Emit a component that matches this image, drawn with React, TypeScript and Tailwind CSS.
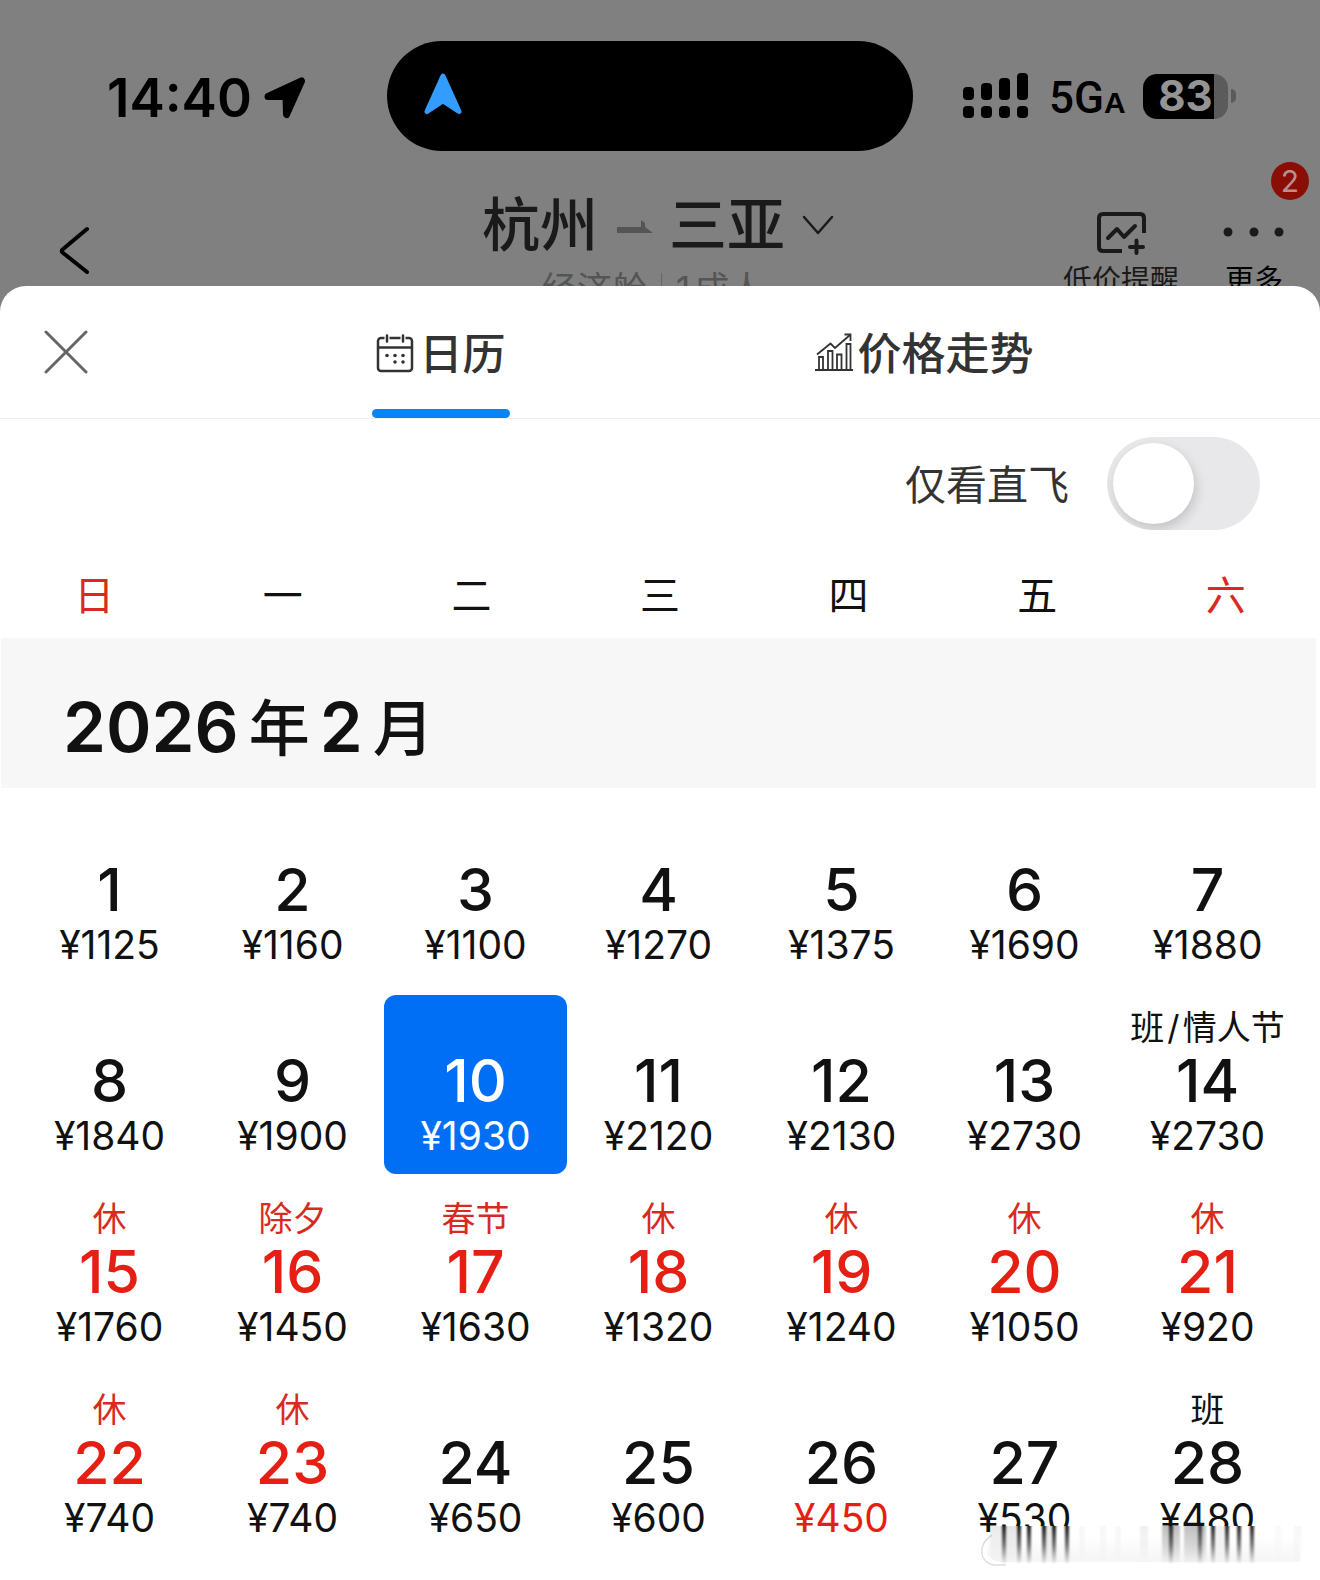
import React, { useState } from 'react';

type Day = {
  day: number;
  price: number;
  note?: string;
  holiday?: boolean;
  lowest?: boolean;
};

const weekdays = ['日', '一', '二', '三', '四', '五', '六'];

const days: Day[] = [
  { day: 1, price: 1125 },
  { day: 2, price: 1160 },
  { day: 3, price: 1100 },
  { day: 4, price: 1270 },
  { day: 5, price: 1375 },
  { day: 6, price: 1690 },
  { day: 7, price: 1880 },
  { day: 8, price: 1840 },
  { day: 9, price: 1900 },
  { day: 10, price: 1930 },
  { day: 11, price: 2120 },
  { day: 12, price: 2130 },
  { day: 13, price: 2730 },
  { day: 14, price: 2730, note: '班\u200a/\u200a情人节' },
  { day: 15, price: 1760, note: '休', holiday: true },
  { day: 16, price: 1450, note: '除夕', holiday: true },
  { day: 17, price: 1630, note: '春节', holiday: true },
  { day: 18, price: 1320, note: '休', holiday: true },
  { day: 19, price: 1240, note: '休', holiday: true },
  { day: 20, price: 1050, note: '休', holiday: true },
  { day: 21, price: 920, note: '休', holiday: true },
  { day: 22, price: 740, note: '休', holiday: true },
  { day: 23, price: 740, note: '休', holiday: true },
  { day: 24, price: 650 },
  { day: 25, price: 600 },
  { day: 26, price: 450, lowest: true },
  { day: 27, price: 530 },
  { day: 28, price: 480, note: '班' },
];

// x, width and opacity of each streak in the faded strip
const streaks = [
  [14, 12, 0.08], [26, 4, 0.9], [30, 10, 0.1], [41, 4, 0.9], [51, 4, 0.9], [66, 4, 0.9], [69, 6, 0.1],
  [76, 4, 0.9], [89, 4, 0.9], [103, 6, 0.03], [124, 6, 0.03], [139, 6, 0.03], [164, 8, 0.06],
  [186, 18, 0.25], [193, 4, 0.8], [208, 22, 0.25], [222, 4, 0.7], [235, 4, 0.85], [240, 8, 0.06], [249, 4, 0.85],
  [261, 4, 0.85], [274, 4, 0.85], [298, 8, 0.02], [318, 8, 0.03],
];

const StatusBar = () => (
  <div className="grid grid-cols-[1fr_526px_1fr] items-center pt-[41px] pr-5 text-black">
    <div className="flex items-center gap-3 pl-[107px]">
      <span className="pt-1 text-[53px] leading-[60px] font-semibold">14:40</span>
      <svg viewBox="0 0 42 42" className="mt-1 h-[42px] w-[42px]" aria-hidden="true">
        <path d="M4 19.500 L37.500 4 L22.500 37.500 L22 19.500 Z" fill="#000" stroke="#000" strokeWidth="7" strokeLinejoin="round" />
      </svg>
    </div>
    <div className="flex h-[110px] items-center rounded-full bg-black pl-[37px]">
      <svg viewBox="0 0 38 42" className="mb-1 h-[42px] w-[38px]" aria-hidden="true">
        <path d="M19 3 L35 38.500 L19 28 L3 38.500 Z" fill="#339cff" stroke="#339cff" strokeWidth="5" strokeLinejoin="round" />
      </svg>
    </div>
    <div className="flex items-center pl-[50px]">
      <svg viewBox="0 0 66 46" className="h-[46px] w-[66px] shrink-0" aria-hidden="true">
        <rect x="0" y="14" width="11" height="13" rx="4" />
        <rect x="18" y="10" width="11" height="17" rx="4" />
        <rect x="36" y="5" width="11" height="22" rx="4" />
        <rect x="54" y="0" width="11" height="27" rx="4" />
        <rect x="0" y="33" width="11" height="12" rx="4" />
        <rect x="18" y="33" width="11" height="12" rx="4" />
        <rect x="36" y="33" width="11" height="12" rx="4" />
        <rect x="54" y="33" width="11" height="12" rx="4" />
      </svg>
      <span className="ml-5 w-[74px] pt-2 font-['Roboto'] text-[44px] leading-[50px] font-medium whitespace-nowrap">
        5G<span className="font-['Liberation_Sans'] text-[30px] font-bold">A</span>
      </span>
      <div className="ml-5 flex h-[45px] w-[85px] items-center justify-center rounded-[14px] bg-linear-to-r from-black from-[83%] to-[#5b5b5b] to-[83%]">
        <span className="text-[42px] leading-[52px] font-bold text-[#949494]">83</span>
      </div>
      <span className="ml-[3px] h-[14px] w-[5px] rounded-r-full bg-[#5b5b5b]" />
    </div>
  </div>
);

const FlightHeader = () => (
  <header className="grid h-[135px] grid-cols-[1fr_auto_1fr] items-start text-[#1a1a1a]">
    <button type="button" aria-label="返回" className="ml-[58px] mt-[75px] w-[34px]">
      <svg viewBox="0 0 34 50" className="h-[50px] w-[34px]" fill="none" stroke="#000" strokeWidth="4" strokeLinecap="round" strokeLinejoin="round">
        <path d="M29 3 L4.500 23.500 Q3 25 4.500 26.500 L29 46" />
      </svg>
    </button>
    <div className="flex flex-col items-center pr-1">
      <button type="button" className="mt-[34px] flex items-center">
        <span className="text-[58px] leading-[80px] font-medium">杭州</span>
        <svg viewBox="0 0 36 14" className="mr-4 ml-[19px] mt-1 h-[14px] w-9" aria-hidden="true">
          <path d="M0 7 H24 V0 L28 3 V7 L36 13 H0 Z" fill="#555" />
        </svg>
        <span className="text-[58px] leading-[80px] font-medium">三亚</span>
        <svg viewBox="0 0 32 20" className="ml-[17px] h-5 w-8" fill="none" stroke="#1a1a1a" strokeWidth="2.500" strokeLinecap="round" strokeLinejoin="round" aria-hidden="true">
          <path d="M2 2 L16 18 L30 2" />
        </svg>
      </button>
      <p className="flex items-center gap-[14px] pt-1 pr-[10px] text-[35px] leading-[40px] text-[#555]">
        <span>经济舱</span>
        <span className="h-8 w-px bg-[#666]" />
        <span className="flex gap-1">
          <span>1</span>
          <span>成人</span>
        </span>
      </p>
    </div>
    <div className="flex items-start justify-end">
      <button type="button" className="mt-[60px] flex flex-col items-center">
        <svg viewBox="0 0 50 44" className="h-11 w-[50px]" fill="none" stroke="#1a1a1a" strokeWidth="4" aria-hidden="true">
          <path d="M26 40 H7 Q3 40 3 36 V7 Q3 3 7 3 H44 Q48 3 48 7 V22" />
          <path d="M12 27 L21 18 L28 26 L39 15" strokeLinecap="round" strokeLinejoin="round" />
          <path d="M34 36 H47 M40.500 29.500 V42" strokeLinecap="round" />
        </svg>
        <span className="mt-2 text-[29px] leading-[36px]">低价提醒</span>
      </button>
      <button type="button" className="relative mt-[60px] mr-[35px] ml-[44px] flex flex-col items-center">
        <svg viewBox="0 0 62 44" className="h-11 w-[62px]" fill="#1a1a1a" aria-hidden="true">
          <circle cx="5" cy="21" r="4.500" />
          <circle cx="31" cy="21" r="4.500" />
          <circle cx="56" cy="21" r="4.500" />
        </svg>
        <span className="mt-2 text-[29px] leading-[36px] text-black">更多</span>
        <span className="absolute -top-[49px] -right-6 flex h-[38px] w-[38px] items-center justify-center rounded-full bg-[#8b0e06] text-[30px] leading-none text-[#b9908e]">
          2
        </span>
      </button>
    </div>
  </header>
);

const CalendarIcon = () => (
  <svg viewBox="0 0 38 40" className="h-10 w-[38px]" fill="none" stroke="#333" strokeWidth="2.500" aria-hidden="true">
    <rect x="2" y="4" width="34" height="33" rx="3" />
    <path d="M2 13.500 H36" strokeWidth="2.500" />
    <path d="M11 1 V8 M27 1 V8" stroke="#fff" strokeWidth="5" />
    <path d="M11 1.500 V7.500 M27 1.500 V7.500" strokeLinecap="round" />
    <g fill="#333" stroke="none">
      <circle cx="11" cy="21.500" r="1.800" />
      <circle cx="19" cy="21.500" r="1.800" />
      <circle cx="27" cy="21.500" r="1.800" />
      <circle cx="19" cy="28" r="1.800" />
      <circle cx="27" cy="28" r="1.800" />
    </g>
  </svg>
);

const TrendIcon = () => (
  <svg viewBox="0 0 40 40" className="mb-1 h-10 w-10" fill="none" stroke="#333" strokeWidth="1.800" aria-hidden="true">
    <path d="M1 38 H39" />
    <path d="M5 38 V25 H9 V38 M14 38 V19 H18.500 V38 M23 38 V22.500 H27.500 V38 M32.500 38 V12 H36.500 V38" />
    <path d="M3 22.500 L16.500 11.500 L21 16 L36 3" />
    <path d="M30.500 2.500 H36.500 V9" />
  </svg>
);

const DayCell = ({ item, selected, onSelect }: { item: Day; selected: boolean; onSelect: () => void }) => {
  const dayColor = selected ? 'text-white' : item.holiday ? 'text-[#e61f15]' : 'text-[#111]';
  const priceColor = selected ? 'text-white' : item.lowest ? 'text-[#e61f15]' : 'text-[#111]';
  const noteColor = selected ? 'text-white' : item.holiday ? 'text-[#d92a20]' : 'text-[#111]';

  return (
    <button
      type="button"
      aria-pressed={selected}
      onClick={onSelect}
      className={`flex h-[179px] flex-col items-center rounded-xl ${selected ? 'bg-[#006ff6]' : ''}`}
    >
      <span className={`mt-2 h-12 text-[34px] leading-[50px] whitespace-nowrap ${noteColor}`}>{item.note}</span>
      <span className={`text-[59px] leading-[60px] font-medium ${dayColor}`}>{item.day}</span>
      <span className={`text-[39px] leading-[50px] ${priceColor}`}>¥{item.price}</span>
    </button>
  );
};

const App = () => {
  const [tab, setTab] = useState('calendar');
  const [directOnly, setDirectOnly] = useState(false);
  const [selectedDay, setSelectedDay] = useState(10);

  return (
    <div className="relative flex min-h-screen flex-col overflow-hidden bg-[#808080] font-['Inter','Noto_Sans_CJK_SC',sans-serif]">
      <StatusBar />
      <FlightHeader />

      <main className="relative flex-1 rounded-t-[26px] bg-white pb-3">
        <div className="grid h-[133px] grid-cols-[130px_1fr_1fr] border-b border-[#efefef]">
          <button type="button" aria-label="关闭" className="pl-11">
            <svg viewBox="0 0 44 44" className="h-11 w-11" stroke="#666" strokeWidth="3" strokeLinecap="round">
              <path d="M2 2 L42 42 M42 2 L2 42" />
            </svg>
          </button>
          <button
            type="button"
            onClick={() => setTab('calendar')}
            className="relative mr-[-26px] flex items-center justify-center gap-[6px] pt-1 text-[43px] leading-[60px] font-medium text-[#333]"
          >
            <CalendarIcon />
            日历
            {tab === 'calendar' && <span className="absolute bottom-0 h-[9px] w-[138px] rounded-full bg-[#0a84f0]" />}
          </button>
          <button
            type="button"
            onClick={() => setTab('trend')}
            className="relative flex items-center justify-center gap-1 pt-1 pr-[198px] text-[44px] leading-[60px] font-medium text-[#333]"
          >
            <TrendIcon />
            价格走势
            {tab === 'trend' && <span className="absolute bottom-0 h-[9px] w-[138px] rounded-full bg-[#0a84f0]" />}
          </button>
        </div>

        <label className="flex items-center justify-end gap-[38px] pt-[18px] pr-[60px] text-[41px] leading-[60px] text-[#333]">
          <span className="pt-[2px]">仅看直飞</span>
          <input
            type="checkbox"
            checked={directOnly}
            onChange={(e) => setDirectOnly(e.target.checked)}
            className="h-[93px] w-[153px] appearance-none overflow-hidden rounded-full bg-[#e8e8ea] p-1.5 before:block before:h-[81px] before:w-[81px] before:rounded-full before:bg-white before:shadow-[2px_5px_12px_rgba(0,0,0,0.16)] checked:bg-[#006ff6] checked:before:ml-[60px]"
          />
        </label>

        <div className="mt-9 grid h-[72px] grid-cols-7 text-center text-[40px] leading-[60px]">
          {weekdays.map((name, i) => (
            <span key={name} className={i === 0 || i === 6 ? 'text-[#d92a20]' : 'text-[#111]'}>
              {name}
            </span>
          ))}
        </div>

        <h2 className="mr-1 ml-px flex h-[150px] items-center gap-[10px] bg-[#f7f7f7] pt-7 pl-[62px] font-semibold text-[#111]">
          <span className="text-[69px] leading-[80px]">2026</span>
          <span className="pt-1 text-[61px] leading-[80px] font-medium">年</span>
          <span className="text-[69px] leading-[80px]">2</span>
          <span className="pt-1 text-[61px] leading-[80px] font-medium">月</span>
        </h2>

        <div className="mt-4 grid grid-cols-7 gap-y-3 pr-[21px] pl-[18px]">
          {days.map((item) => (
            <DayCell
              key={item.day}
              item={item}
              selected={item.day === selectedDay}
              onSelect={() => setSelectedDay(item.day)}
            />
          ))}
        </div>
      </main>

      {/* Faded strip over the last prices */}
      <svg viewBox="0 0 336 44" className="pointer-events-none absolute right-2 bottom-3 h-11 w-[336px]" aria-hidden="true">
        <defs>
          <linearGradient id="fade" x1="0" y1="0" x2="0" y2="1">
            <stop offset="0" stopColor="#000" />
            <stop offset="0.500" stopColor="#000" stopOpacity="0.600" />
            <stop offset="1" stopColor="#000" stopOpacity="0.020" />
          </linearGradient>
          <linearGradient id="haze" x1="0" y1="0" x2="0" y2="1">
            <stop offset="0" stopColor="#fff" />
            <stop offset="1" stopColor="#f5f5f5" />
          </linearGradient>
          <filter id="soft" x="-2" width="5">
            <feGaussianBlur stdDeviation="1 0" />
          </filter>
        </defs>
        <rect x="22" y="2" width="314" height="42" fill="#fff" />
        <rect x="8" y="8" width="30" height="36" fill="#fff" />
        <path d="M14 12 H318 Q326 26 324 38 H24 Q12 36 10 26 Z" fill="url(#haze)" />
        <path d="M16 11 C2 20 2 38 18 41 H30" fill="none" stroke="#dedede" strokeWidth="1.500" />
        {streaks.map(([x, width, opacity]) => (
          <rect key={x} x={x} y="2" width={width} height="38" fill="url(#fade)" opacity={opacity} filter="url(#soft)" />
        ))}
      </svg>
    </div>
  );
};

export default App;
